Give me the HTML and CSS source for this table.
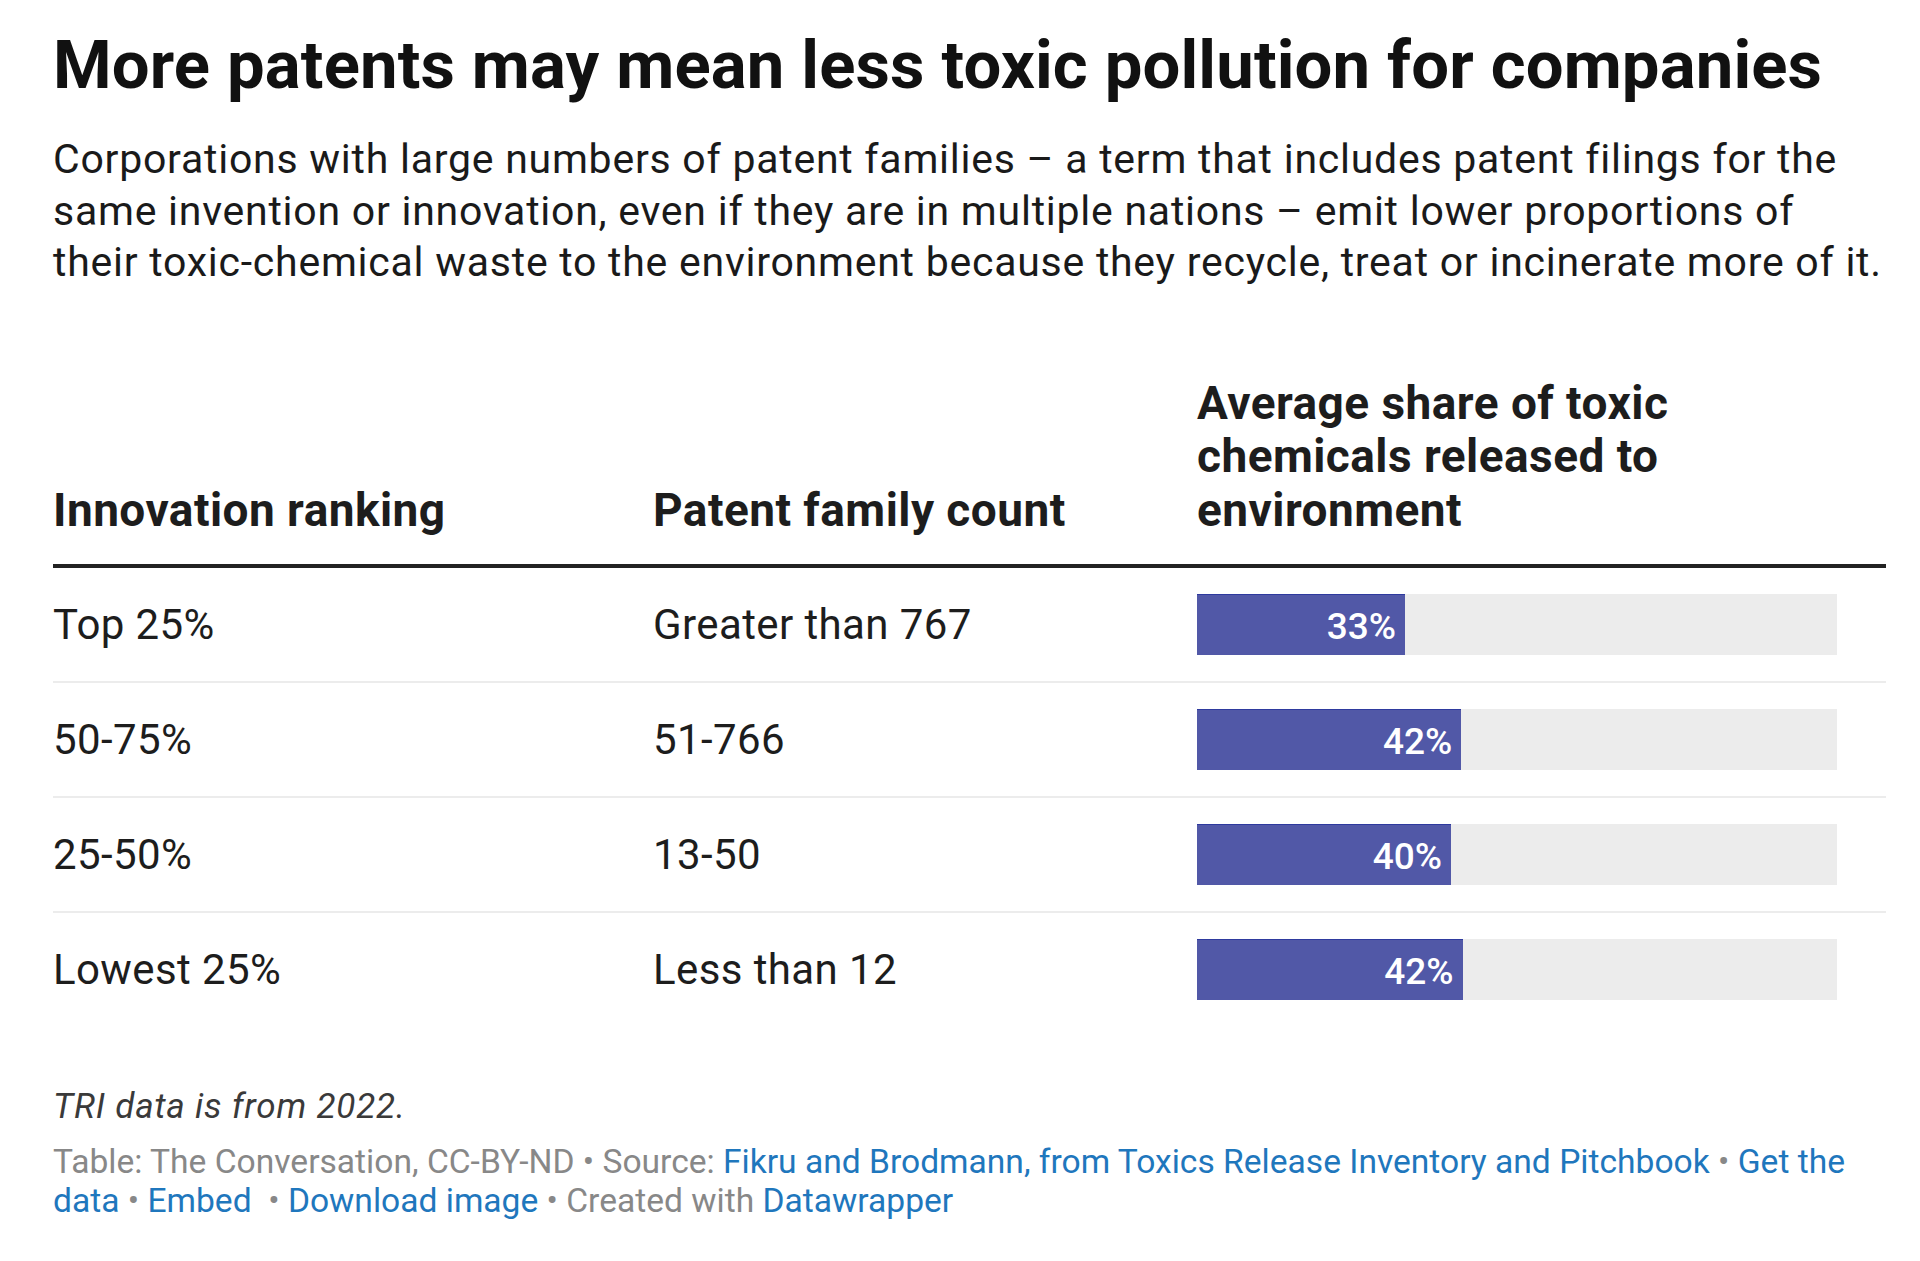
FILE: index.html
```html
<!DOCTYPE html>
<html lang="en">
<head>
<meta charset="utf-8">
<title>More patents may mean less toxic pollution for companies</title>
<link rel="stylesheet" href="styles.css">
</head>
<body>
<div class="chart">
  <h1 class="title">More patents may mean less toxic pollution for companies</h1>
  <p class="desc">Corporations with large numbers of patent families – a term that includes patent filings for the same invention or innovation, even if they are in multiple nations – emit lower proportions of their toxic-chemical waste to the environment because they recycle, treat or incinerate more of it.</p>

  <div class="table">
    <div class="row head">
      <div class="cell">Innovation ranking</div>
      <div class="cell">Patent family count</div>
      <div class="cell wrap">Average share of toxic chemicals released to environment</div>
    </div>
    <div class="row">
      <div class="cell">Top 25%</div>
      <div class="cell">Greater than 767</div>
      <div class="cell"><div class="track"><div class="bar" style="width:32.5%"><span>33%</span></div></div></div>
    </div>
    <div class="row">
      <div class="cell">50-75%</div>
      <div class="cell">51-766</div>
      <div class="cell"><div class="track"><div class="bar" style="width:41.3%"><span>42%</span></div></div></div>
    </div>
    <div class="row">
      <div class="cell">25-50%</div>
      <div class="cell">13-50</div>
      <div class="cell"><div class="track"><div class="bar" style="width:39.7%"><span>40%</span></div></div></div>
    </div>
    <div class="row last">
      <div class="cell">Lowest 25%</div>
      <div class="cell">Less than 12</div>
      <div class="cell"><div class="track"><div class="bar" style="width:41.5%"><span>42%</span></div></div></div>
    </div>
  </div>

  <p class="notes">TRI data is from 2022.</p>
  <p class="footer">Table: The Conversation, CC-BY-ND • Source: <a>Fikru and Brodmann, from Toxics Release Inventory and Pitchbook</a> • <a>Get the data</a> • <a>Embed</a> &nbsp;• <a>Download image</a> • Created with <a>Datawrapper</a></p>
</div>
</body>
</html>
```

FILE: styles.css
```css
html, body {
  margin: 0;
  padding: 0;
  background: #ffffff;
}

body {
  font-family: Roboto, "Liberation Sans", Arial, sans-serif;
  color: #1d1d1d;
}

.chart {
  width: 1833px;
  padding: 25px 0 0 53px;
}

.title {
  margin: 0;
  font-size: 67px;
  line-height: 80px;
  font-weight: 700;
  color: #111;
  letter-spacing: 0.15px;
}

.desc {
  margin: 29px 0 0 0;
  font-size: 41px;
  line-height: 51.5px;
  font-weight: 400;
  color: #1a1a1a;
  letter-spacing: 0.75px;
}

.table {
  margin-top: 88px;
}

.row {
  display: grid;
  grid-template-columns: 600px 544px 1fr;
  align-items: center;
  height: 113px;
  border-bottom: 2px solid #ececec;
}

.row.last {
  border-bottom: none;
}

.row.head {
  height: auto;
  align-items: end;
  padding-bottom: 27px;
  border-bottom: 4px solid #222;
}

.cell {
  font-size: 42px;
  line-height: 48px;
  color: #1d1d1d;
  letter-spacing: 0.4px;
}

.head .cell {
  font-size: 46px;
  line-height: 53.5px;
  font-weight: 700;
  letter-spacing: 0.45px;
}

.head .cell.wrap {
  width: 500px;
}

.track {
  width: 640px;
  height: 61px;
  background: #ececec;
  display: flex;
}

.bar {
  height: 100%;
  background: #5158a7;
  box-shadow: inset 0 1px 0 #2e3a9e;
  display: flex;
  align-items: center;
  justify-content: flex-end;
  box-sizing: border-box;
  padding-right: 9px;
}

.bar span {
  color: #ffffff;
  font-size: 37px;
  font-weight: 500;
  line-height: 1;
  padding-top: 3px;
  letter-spacing: 0;
}

.notes {
  margin: 61px 0 0 0;
  font-size: 35px;
  line-height: 40px;
  font-style: italic;
  color: #3a3a3a;
  letter-spacing: 0.8px;
}

.footer {
  margin: 15px 0 0 0;
  font-size: 33.6px;
  line-height: 39px;
  color: #888888;
}

.footer a {
  color: #1f77bd;
  text-decoration: none;
}
```
